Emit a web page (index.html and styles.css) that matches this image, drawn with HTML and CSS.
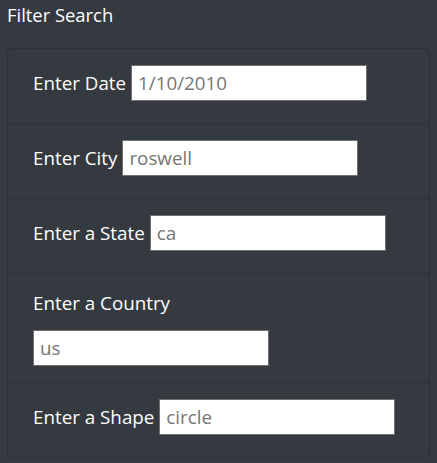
FILE: index.html
```html
<!DOCTYPE html>
<html lang="en">
<head>
<meta charset="utf-8">
<title>Filter Search</title>
<link rel="stylesheet" href="styles.css">
</head>
<body>
<div class="page">
  <h1 class="title">Filter Search</h1>
  <form class="card">
    <div class="row">
      <label for="date">Enter Date</label>
      <input id="date" type="text" placeholder="1/10/2010">
    </div>
    <div class="row">
      <label for="city">Enter City</label>
      <input id="city" type="text" placeholder="roswell">
    </div>
    <div class="row">
      <label for="state">Enter a State</label>
      <input id="state" type="text" placeholder="ca">
    </div>
    <div class="row row-stacked">
      <label for="country">Enter a Country</label>
      <input id="country" type="text" placeholder="us">
    </div>
    <div class="row">
      <label for="shape">Enter a Shape</label>
      <input id="shape" type="text" placeholder="circle">
    </div>
  </form>
</div>
</body>
</html>
```
FILE: styles.css
```css
html, body {
  margin: 0;
  background: #343a40;
}
body {
  font-family: "Open Sans", "Noto Sans", sans-serif;
  color: #ffffff;
  height: 463px;
}
.page {
  padding: 0 7px;
}
.title {
  margin: 0;
  font-size: 18.4px;
  font-weight: 400;
  line-height: 27px;
  padding-top: 1px;
}
.card {
  margin-top: 20px;
  border: 1px solid #2b3035;
  border-radius: 5px;
}
.row {
  display: flex;
  flex-wrap: wrap;
  align-items: center;
  column-gap: 5px;
  row-gap: 13px;
  padding: 16px 25px 22px;
  border-top: 1px solid #2b3035;
}
.row:first-child {
  border-top: none;
}
.row-stacked {
  padding-bottom: 16px;
}
.row label {
  font-size: 18.8px;
  line-height: 27px;
}
.row input {
  box-sizing: border-box;
  width: 236px;
  height: 36px;
  margin: 0;
  padding: 0 6px;
  border: 1px solid #6f6f6f;
  border-radius: 0;
  background: #ffffff;
  font-family: inherit;
  font-size: 18.8px;
  color: #6c757d;
  outline: none;
}
.row input::placeholder {
  color: #757575;
  opacity: 1;
}
```
